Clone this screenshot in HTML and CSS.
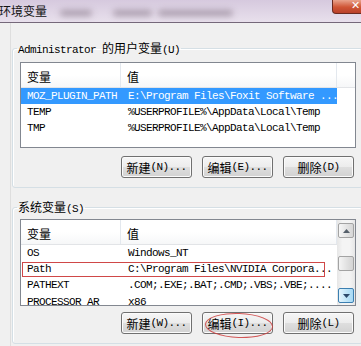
FILE: index.html
```html
<!doctype html>
<html>

<head>
  <meta charset="utf-8">
  <title>环境变量</title>
  <meta name="viewport" content="width=device-width, initial-scale=1.0">
  <link rel="stylesheet" href="styles.css">
</head>

<body>
  <div class="window">

    <!-- Title Bar -->
    <div class="titlebar">
      <span class="title cn">环境变量</span>
      <span class="smudge s1"></span>
      <span class="smudge s2"></span>
      <span class="smudge s3"></span>
      <span class="close-button">✕</span>
    </div>

    <div class="dialog">

      <!-- User Variables -->
      <fieldset class="group group-user">
        <legend>Administrator <span class="cn">的用户变量</span>(U)</legend>
        <div class="list list-user">
          <div class="list-body">
            <div class="list-header">
              <div class="head-name"><span class="cn">变量</span></div>
              <div class="head-value"><span class="cn">值</span></div>
            </div>
            <div class="row selected">
              <div class="cell-name">MOZ_PLUGIN_PATH</div>
              <div class="cell-value">E:\Program Files\Foxit Software ...</div>
            </div>
            <div class="row">
              <div class="cell-name">TEMP</div>
              <div class="cell-value">%USERPROFILE%\AppData\Local\Temp</div>
            </div>
            <div class="row">
              <div class="cell-name">TMP</div>
              <div class="cell-value">%USERPROFILE%\AppData\Local\Temp</div>
            </div>
          </div>
        </div>
        <div class="button-row">
          <button class="button"><span class="cn">新建</span>(N)...</button>
          <button class="button"><span class="cn">编辑</span>(E)...</button>
          <button class="button"><span class="cn">删除</span>(D)</button>
        </div>
      </fieldset>

      <!-- System Variables -->
      <fieldset class="group group-system">
        <legend><span class="cn">系统变量</span>(S)</legend>
        <div class="list list-system">
          <div class="list-body">
            <div class="list-header">
              <div class="head-name"><span class="cn">变量</span></div>
              <div class="head-value"><span class="cn">值</span></div>
            </div>
            <div class="row">
              <div class="cell-name">OS</div>
              <div class="cell-value">Windows_NT</div>
            </div>
            <div class="row marked">
              <div class="cell-name">Path</div>
              <div class="cell-value">C:\Program Files\NVIDIA Corpora...</div>
            </div>
            <div class="row">
              <div class="cell-name">PATHEXT</div>
              <div class="cell-value">.COM;.EXE;.BAT;.CMD;.VBS;.VBE;....</div>
            </div>
            <div class="row last">
              <div class="cell-name">PROCESSOR AR</div>
              <div class="cell-value">x86</div>
            </div>
          </div>
          <div class="scrollbar">
            <div class="sb-button">
              <svg width="7" height="4" viewBox="0 0 7 4"><polygon points="0,4 3.5,0 7,4" fill="#56606b"/></svg>
            </div>
            <div class="sb-thumb"></div>
            <div class="sb-button hover">
              <svg width="7" height="4" viewBox="0 0 7 4"><polygon points="0,0 3.5,4 7,0" fill="#2d4a6a"/></svg>
            </div>
          </div>
        </div>
        <div class="button-row">
          <button class="button"><span class="cn">新建</span>(W)...</button>
          <button class="button circled"><span class="cn">编辑</span>(I)...<span class="circle"></span></button>
          <button class="button"><span class="cn">删除</span>(L)</button>
        </div>
      </fieldset>

    </div>
  </div>
</body>

</html>
```

FILE: styles.css
```css
body {
  margin: 0;
  background-color: #f0f0f0;
  font-family: "Liberation Mono", monospace;
  font-size: 11px;
  letter-spacing: -0.6px;
  color: #000;
}

.cn {
  font-family: "Noto Sans CJK SC", sans-serif;
  font-size: 12px;
  letter-spacing: 0;
}

.window {
  width: 361px;
  height: 346px;
  overflow: hidden;
}

/* Title bar */
.titlebar {
  display: flex;
  align-items: center;
  height: 22px;
  border-bottom: 1px solid #75687a;
  background: linear-gradient(#d6c9de, #e8e0ec);
}

.title {
  margin-left: -1px;
  line-height: 16px;
  color: #111;
}

.smudge {
  height: 6px;
  margin-top: 4px;
  border-radius: 3px;
  background-color: #9a8c9c;
  filter: blur(3px);
  opacity: 0.8;
}

.s1 {
  margin-left: 13px;
  width: 32px;
}

.s2 {
  margin-left: 21px;
  width: 39px;
}

.s3 {
  margin-left: 6px;
  width: 75px;
}

.close-button {
  align-self: flex-start;
  margin-left: auto;
  margin-right: -4px;
  width: 33px;
  height: 14px;
  box-sizing: border-box;
  padding-left: 18px;
  border: 1px solid #6b2a20;
  border-top: none;
  border-radius: 0 0 0 4px;
  background: linear-gradient(#e9a38c, #cf5535 55%, #b9402a);
  color: #fff;
  font-family: "DejaVu Sans", sans-serif;
  font-size: 11px;
  font-weight: bold;
  line-height: 11px;
  letter-spacing: 0;
}

/* Dialog body */
.dialog {
  margin-left: 10px;
  padding-top: 19px;
  border-left: 1px solid #dedede;
  height: 323px;
  box-sizing: border-box;
}

.group {
  margin: 0 0 0 1px;
  width: 351px;
  box-sizing: border-box;
  padding: 8px 6px 9px 7px;
  border: 1px solid #d5dfe5;
  border-radius: 3px;
  box-shadow: inset 1px 1px 0 #fff;
}

.group legend {
  margin-left: -3px;
  padding: 0 1px;
  height: 12px;
  line-height: 12px;
}

.group-system {
  margin-top: 13px;
  padding-top: 6px;
}

/* List views */
.list {
  display: flex;
  width: 336px;
  box-sizing: border-box;
  border: 1px solid #828790;
  background-color: #fff;
  overflow: hidden;
}

.list-user {
  height: 86px;
}

.list-system {
  height: 87px;
}

.list-body {
  flex: 1;
  min-width: 0;
}

.list-header {
  display: flex;
  height: 25px;
  box-sizing: border-box;
  border-bottom: 1px solid #e2e4e7;
  background: linear-gradient(#ffffff, #ffffff 50%, #f6f7f8);
}

.head-name,
.head-value {
  display: flex;
  align-items: center;
  padding: 2px 0 0 6px;
  box-sizing: border-box;
  border-right: 1px solid #e3e8ee;
}

.head-name {
  width: 100px;
}

.head-value {
  width: 216px;
}

.row {
  position: relative;
  display: flex;
  width: 316px;
  height: 16px;
  line-height: 16px;
  white-space: nowrap;
}

.row.last {
  line-height: 18px;
}

.row.selected {
  background-color: #3399ff;
  color: #fff;
}

.row.marked::after {
  content: "";
  position: absolute;
  left: 1px;
  top: 1px;
  width: 303px;
  height: 15px;
  box-sizing: border-box;
  border: 1px solid #d04848;
}

.cell-name {
  width: 100px;
  padding-left: 6px;
  box-sizing: border-box;
  overflow: hidden;
}

.cell-value {
  flex: 1;
  padding-left: 7px;
  overflow: hidden;
}

/* Scrollbar */
.scrollbar {
  width: 18px;
  display: flex;
  flex-direction: column;
  align-items: center;
  padding-top: 3px;
  box-sizing: border-box;
  background: linear-gradient(to right, #e6e6e6, #f4f4f4 30%, #f4f4f4 70%, #e6e6e6);
}

.sb-button {
  width: 16px;
  height: 15px;
  box-sizing: border-box;
  display: flex;
  align-items: center;
  justify-content: center;
  border: 1px solid #a3a3a3;
  border-radius: 2px;
  background: linear-gradient(to right, #f7f7f7, #e2e2e2 60%, #d6d6d6);
}

.sb-button.hover {
  margin-top: 17px;
  border-color: #3c7fb1;
  background: linear-gradient(to right, #e5f5fd, #bde4f8 60%, #a7d9f5);
}

.sb-thumb {
  margin-top: 18px;
  width: 16px;
  height: 15px;
  box-sizing: border-box;
  border: 1px solid #a3a3a3;
  border-radius: 2px;
  background: linear-gradient(to right, #f5f5f5, #e0e0e0 60%, #d4d4d4);
}

/* Buttons */
.button-row {
  display: flex;
  justify-content: flex-end;
  gap: 10px;
  margin-top: 8px;
  padding-right: 2px;
}

.group-system .button-row {
  margin-top: 6px;
}

.button {
  width: 71px;
  height: 22px;
  box-sizing: border-box;
  padding: 0;
  display: flex;
  align-items: center;
  justify-content: center;
  border: 1px solid #707070;
  border-radius: 3px;
  background: linear-gradient(#f6f6f6, #ececec 50%, #dedede 51%, #d2d2d2);
  box-shadow: inset 0 0 0 1px #fbfbfb;
  font-family: inherit;
  font-size: inherit;
  letter-spacing: inherit;
  color: #000;
  white-space: nowrap;
}

.button.circled {
  position: relative;
}

.circle {
  position: absolute;
  left: 2px;
  top: 0;
  width: 68px;
  height: 25px;
  box-sizing: border-box;
  border: 1px solid rgba(205, 60, 60, 0.85);
  border-radius: 50%;
  transform: rotate(2deg);
}
```
